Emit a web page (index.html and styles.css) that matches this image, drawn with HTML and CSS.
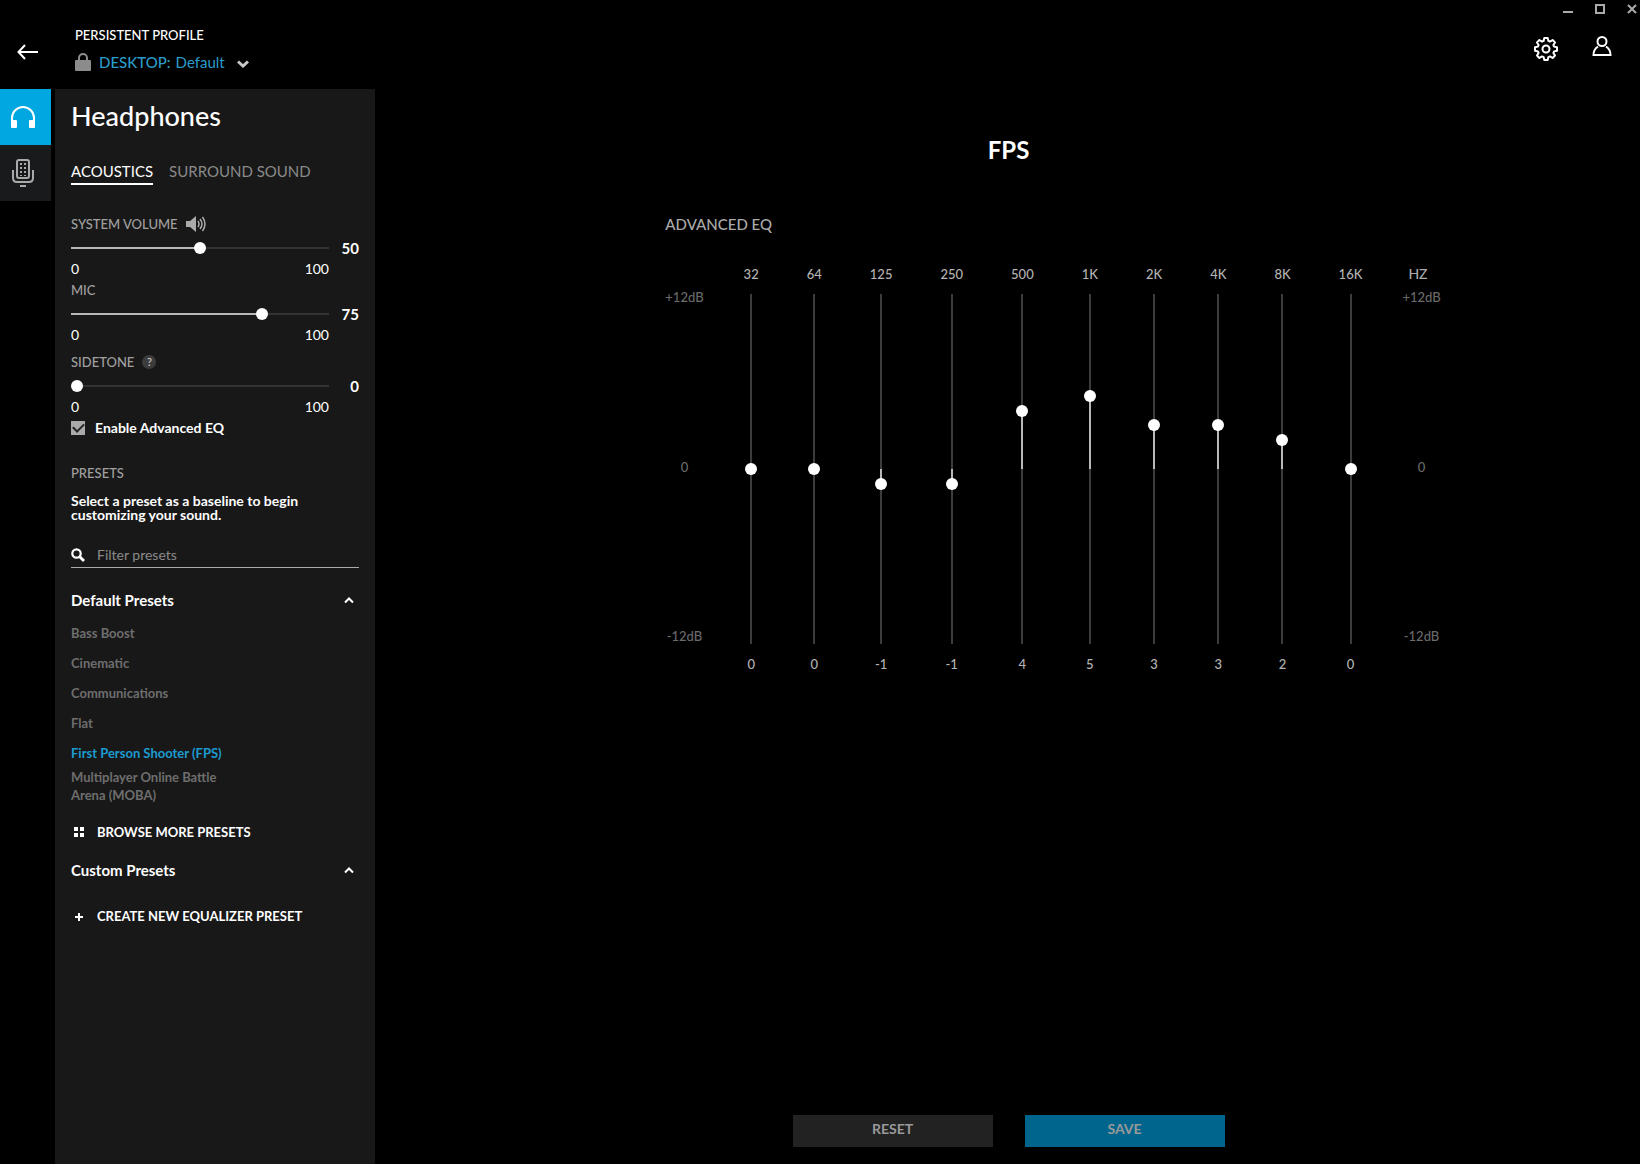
FILE: index.html
```html
<!DOCTYPE html>
<html lang="en">
<head>
<meta charset="utf-8">
<meta name="viewport" content="width=device-width, initial-scale=1">
<title>Headphones - Equalizer</title>
<link rel="stylesheet" href="styles.css">
</head>
<body>
<div class="app">
  <header class="topbar">
    <button class="icon-btn back" type="button" aria-label="Back">
      <svg width="22" height="16" viewBox="0 0 22 16" fill="none" stroke="#fff" stroke-width="2"><path d="M21 8H1.500M8 1L1.500 8L8 15"/></svg>
    </button>
    <div class="profile">
      <div class="profile-title">PERSISTENT PROFILE</div>
      <div class="profile-row">
        <svg width="16" height="18" viewBox="0 0 16 18"><path d="M4 8V5a4 4 0 0 1 8 0v3" fill="none" stroke="#8c8c8c" stroke-width="2"/><rect y="7" width="16" height="11" rx="1" fill="#8c8c8c"/></svg>
        <label class="profile-label" for="profile">DESKTOP:</label>
        <select class="profile-select" id="profile"><option>Default</option></select>
        <svg class="profile-caret" width="12" height="8" viewBox="0 0 12 8" fill="none" stroke="#c8c8c8" stroke-width="3"><path d="M1 1.500L6 6L11 1.500"/></svg>
      </div>
    </div>
    <div class="top-right">
      <div class="window-controls">
        <button class="icon-btn" type="button" aria-label="Minimize"><svg width="10" height="10" viewBox="0 0 10 10"><path d="M0 8H10" stroke="#aaa" stroke-width="2"/></svg></button>
        <button class="icon-btn" type="button" aria-label="Maximize"><svg width="10" height="10" viewBox="0 0 10 10"><rect x="1" y="1" width="8" height="8" fill="none" stroke="#aaa" stroke-width="2"/></svg></button>
        <button class="icon-btn" type="button" aria-label="Close"><svg width="10" height="10" viewBox="0 0 10 10"><path d="M1 1L9 9M9 1L1 9" stroke="#aaa" stroke-width="2"/></svg></button>
      </div>
      <div class="account">
        <button class="icon-btn" type="button" aria-label="Settings">
          <svg width="26" height="26" viewBox="0 0 26 26" fill="none" stroke="#fff" stroke-width="2" stroke-linejoin="round"><path d="M11.300 2h3.400l.7 2.900 1.600.7 2.600-1.600 2.400 2.400-1.600 2.600.7 1.600 2.900.7v3.400l-2.900.7-.7 1.600 1.600 2.600-2.400 2.400-2.600-1.600-1.600.7-.7 2.900h-3.400l-.7-2.900-1.600-.7-2.600 1.600-2.400-2.400 1.600-2.600-.7-1.600-2.900-.7v-3.400l2.900-.7.7-1.600-1.600-2.600 2.400-2.400 2.600 1.600 1.600-.7z"/><circle cx="13" cy="13" r="3.500"/></svg>
        </button>
        <button class="icon-btn user" type="button" aria-label="Account">
          <svg width="20" height="20" viewBox="0 0 20 20" fill="none" stroke="#fff" stroke-width="2"><circle cx="10" cy="5.500" r="4.500"/><path d="M6 10.500C3 12.500 1.500 15 1.500 19H18.500C18.500 15 17 12.500 14 10.500"/></svg>
        </button>
      </div>
    </div>
  </header>

  <nav class="rail" aria-label="Device sections">
    <button class="rail-btn active" type="button" aria-label="Headphones">
      <svg width="26" height="24" viewBox="0 0 26 24"><path d="M2 18V13a11 11 0 0 1 22 0v5" fill="none" stroke="#fff" stroke-width="2"/><rect x="1" y="15" width="6" height="8" rx="1" fill="#fff"/><rect x="19" y="15" width="6" height="8" rx="1" fill="#fff"/></svg>
    </button>
    <button class="rail-btn" type="button" aria-label="Microphone">
      <svg width="24" height="30" viewBox="0 0 24 30" fill="none" stroke="#aaa" stroke-width="2"><rect x="6" y="2" width="12" height="18" rx="2"/><path d="M2 12v8q0 4 4 4h12q4 0 4-4v-8M9 28h6"/><path d="M10 5v13M14 5v13" stroke-dasharray="2 2"/></svg>
    </button>
  </nav>

  <aside class="panel">
    <h1 class="panel-title">Headphones</h1>
    <div class="tabs" role="tablist">
      <button class="tab active" type="button" role="tab" aria-selected="true">ACOUSTICS</button>
      <button class="tab" type="button" role="tab" aria-selected="false">SURROUND SOUND</button>
    </div>

    <section class="level">
      <label class="caption" for="volume">SYSTEM VOLUME
        <svg width="21" height="18" viewBox="0 0 21 18"><path d="M0 6h4l6-5v16l-6-5H0z" fill="#aaa"/><path d="M12 6q2 3 0 6M14 4q4 5 0 10M16.500 2q5 7 0 14" fill="none" stroke="#aaa" stroke-width="1.500"/></svg>
      </label>
      <div class="level-row"><input class="h-range" id="volume" type="range" min="0" max="100" value="50" style="--pos:50%"><output class="level-value" for="volume">50</output></div>
      <div class="level-scale"><span>0</span><span>100</span></div>
    </section>
    <section class="level">
      <label class="caption" for="mic">MIC</label>
      <div class="level-row"><input class="h-range" id="mic" type="range" min="0" max="100" value="75" style="--pos:75%"><output class="level-value" for="mic">75</output></div>
      <div class="level-scale"><span>0</span><span>100</span></div>
    </section>
    <section class="level sidetone">
      <div class="caption"><label for="sidetone">SIDETONE</label><button class="help" type="button" aria-label="About sidetone">?</button></div>
      <div class="level-row"><input class="h-range" id="sidetone" type="range" min="0" max="100" value="0" style="--pos:0%"><output class="level-value" for="sidetone">0</output></div>
      <div class="level-scale"><span>0</span><span>100</span></div>
    </section>

    <label class="check"><input class="check-box" type="checkbox" checked>Enable Advanced EQ</label>

    <h2 class="caption presets-caption">PRESETS</h2>
    <p class="hint">Select a preset as a baseline to begin customizing your sound.</p>
    <div class="search">
      <svg width="14" height="14" viewBox="0 0 14 14" fill="none" stroke="#fff"><circle cx="5.500" cy="5.500" r="4.200" stroke-width="2.200"/><path d="M8.500 8.500L13 13" stroke-width="2.800"/></svg>
      <input class="search-input" type="text" placeholder="Filter presets" aria-label="Filter presets">
    </div>

    <button class="group-head" type="button" aria-expanded="true">Default Presets
      <svg width="10" height="8" viewBox="0 0 10 8" fill="none" stroke="#fff" stroke-width="2"><path d="M1 6.500L5 2.500L9 6.500"/></svg>
    </button>
    <ul class="presets">
      <li><button class="preset" type="button">Bass Boost</button></li>
      <li><button class="preset" type="button">Cinematic</button></li>
      <li><button class="preset" type="button">Communications</button></li>
      <li><button class="preset" type="button">Flat</button></li>
      <li><button class="preset selected" type="button">First Person Shooter (FPS)</button></li>
      <li><button class="preset wrapped" type="button">Multiplayer Online Battle Arena (MOBA)</button></li>
    </ul>
    <button class="action" type="button">
      <svg width="16" height="12" viewBox="0 0 16 12" fill="#fff"><path d="M3 1h4v4H3zM9 1h4v4H9zM3 7h4v4H3zM9 7h4v4H9z"/></svg>BROWSE MORE PRESETS
    </button>
    <button class="group-head custom" type="button" aria-expanded="true">Custom Presets
      <svg width="10" height="8" viewBox="0 0 10 8" fill="none" stroke="#fff" stroke-width="2"><path d="M1 6.500L5 2.500L9 6.500"/></svg>
    </button>
    <button class="action create" type="button">
      <svg width="16" height="12" viewBox="0 0 16 12" stroke="#fff" stroke-width="2"><path d="M4 7h8M8 3v8"/></svg>CREATE NEW EQUALIZER PRESET
    </button>
  </aside>

  <main class="main">
    <h2 class="preset-name">FPS</h2>
    <section class="eq">
      <h3 class="eq-title">ADVANCED EQ</h3>
      <div class="eq-grid">
        <div class="scale"><span class="unit"></span><div class="scale-marks"><span>+12dB</span><span>0</span><span>-12dB</span></div></div>
        <div class="bands">
          <div class="band"><label for="b32">32</label><input class="v-range" id="b32" type="range" min="-12" max="12" value="0" style="--gain:0"><output for="b32">0</output></div>
          <div class="band"><label for="b64">64</label><input class="v-range" id="b64" type="range" min="-12" max="12" value="0" style="--gain:0"><output for="b64">0</output></div>
          <div class="band"><label for="b125">125</label><input class="v-range" id="b125" type="range" min="-12" max="12" value="-1" style="--gain:-1"><output for="b125">-1</output></div>
          <div class="band"><label for="b250">250</label><input class="v-range" id="b250" type="range" min="-12" max="12" value="-1" style="--gain:-1"><output for="b250">-1</output></div>
          <div class="band"><label for="b500">500</label><input class="v-range" id="b500" type="range" min="-12" max="12" value="4" style="--gain:4"><output for="b500">4</output></div>
          <div class="band"><label for="b1k">1K</label><input class="v-range" id="b1k" type="range" min="-12" max="12" value="5" style="--gain:5"><output for="b1k">5</output></div>
          <div class="band"><label for="b2k">2K</label><input class="v-range" id="b2k" type="range" min="-12" max="12" value="3" style="--gain:3"><output for="b2k">3</output></div>
          <div class="band"><label for="b4k">4K</label><input class="v-range" id="b4k" type="range" min="-12" max="12" value="3" style="--gain:3"><output for="b4k">3</output></div>
          <div class="band"><label for="b8k">8K</label><input class="v-range" id="b8k" type="range" min="-12" max="12" value="2" style="--gain:2"><output for="b8k">2</output></div>
          <div class="band"><label for="b16k">16K</label><input class="v-range" id="b16k" type="range" min="-12" max="12" value="0" style="--gain:0"><output for="b16k">0</output></div>
        </div>
        <div class="scale"><span class="unit">HZ</span><div class="scale-marks"><span>+12dB</span><span>0</span><span>-12dB</span></div></div>
      </div>
    </section>
    <div class="buttons">
      <button class="btn" type="button">RESET</button>
      <button class="btn primary" type="button">SAVE</button>
    </div>
  </main>
</div>
</body>
</html>
```
FILE: styles.css
```css
* { box-sizing: border-box; }

body {
  margin: 0;
  background: #000;
  color: #fff;
  font: 14px/16px Lato, "Open Sans", sans-serif;
}

h1, h2, h3, p, ul { margin: 0; padding: 0; }
ul { list-style: none; }

button, input, select {
  margin: 0;
  padding: 0;
  border: 0;
  background: none;
  color: inherit;
  font: inherit;
}

svg { display: block; flex: none; }

.app {
  display: grid;
  grid-template: 89px 1fr / 55px 320px 1fr;
  min-height: 100vh;
}

/* Top bar */
.topbar {
  grid-column: 1 / -1;
  display: flex;
  align-items: flex-start;
}
.icon-btn { display: flex; }
.back { padding: 44px 16px 0 17px; }
.profile { padding: 27px 0 0 20px; }
.profile-title { font-size: 13px; font-weight: 500; }
.profile-row {
  display: flex;
  align-items: center;
  height: 18px;
  margin-top: 10px;
  color: #2b9cc9;
  font-size: 15px;
}
.profile-label { margin-left: 8px; font-weight: 500; }
.profile-select {
  appearance: none;
  field-sizing: content;
  margin-left: 5px;
}
.profile-select option { color: #000; }
.profile-caret { margin: 4px 0 0 12px; }

.top-right { margin-left: auto; }
.window-controls {
  display: flex;
  justify-content: flex-end;
  gap: 22px;
  padding: 4px 3px 0 0;
}
.account {
  display: flex;
  gap: 33px;
  padding: 22px 28px 0 0;
}

/* Side rail */
.rail { display: flex; flex-direction: column; }
.rail-btn {
  display: flex;
  align-items: center;
  justify-content: center;
  width: 51px;
  height: 56px;
  padding-right: 5px;
  background: #181a1c;
}
.rail-btn.active { background: #00a7e0; }

/* Settings panel */
.panel { padding: 11px 16px 24px; background: #181818; }
.panel-title { font: 500 27px/32px Lato, sans-serif; }

.tabs { display: flex; gap: 16px; margin-top: 29px; }
.tab {
  padding-bottom: 2px;
  border-bottom: 2px solid transparent;
  color: #8a8a8a;
  font-size: 15px;
  line-height: 20px;
}
.tab.active { color: #fff; border-color: #fff; }

.caption {
  display: flex;
  align-items: center;
  gap: 8px;
  height: 16px;
  color: #a0a0a0;
  font-size: 13px;
  font-weight: 500;
}
.level { margin-top: 5px; }
.tabs + .level { margin-top: 31px; }
.level.sidetone { margin-top: 11px; }
.level-row { display: flex; justify-content: space-between; margin-top: 8px; }
.level-value { font-size: 15px; font-weight: 700; }
.level-scale {
  display: flex;
  justify-content: space-between;
  margin: 5px 30px 0 0;
}
.help {
  width: 14px;
  height: 14px;
  border-radius: 50%;
  background: #3c3c3c;
  color: #ccc;
  font-size: 11px;
  line-height: 14px;
}

.h-range, .v-range { appearance: none; }
.h-range { width: 258px; height: 16px; }
.h-range::-webkit-slider-runnable-track {
  height: 12px;
  background: linear-gradient(to right, #b8b8b8 var(--pos), #333 var(--pos)) center / 100% 2px no-repeat;
}
.h-range::-webkit-slider-thumb, .v-range::-webkit-slider-thumb {
  appearance: none;
  width: 12px;
  height: 12px;
  border-radius: 50%;
  background: #fff;
}

.check {
  display: flex;
  align-items: center;
  gap: 10px;
  margin-top: 5px;
  font-size: 14px;
  font-weight: 700;
}
.check-box {
  appearance: none;
  display: grid;
  place-items: center;
  width: 14px;
  height: 14px;
  background: #aaa;
}
.check-box:checked::before {
  content: "";
  width: 9px;
  height: 5px;
  margin-bottom: 3px;
  border: solid #222;
  border-width: 0 0 2px 2px;
  rotate: -45deg;
}

.presets-caption { margin-top: 29px; }
.hint {
  max-width: 264px;
  margin-top: 13px;
  font-size: 14px;
  font-weight: 700;
  line-height: 14px;
}
.search {
  display: flex;
  align-items: center;
  gap: 12px;
  height: 25px;
  margin-top: 21px;
  border-bottom: 1px solid #aaa;
}
.search-input { flex: 1; min-width: 0; outline: 0; }
.search-input::placeholder { color: #8a8a8a; }

.group-head {
  display: flex;
  align-items: center;
  justify-content: space-between;
  width: 100%;
  margin-top: 22px;
  padding-right: 5px;
  font-size: 15px;
  font-weight: 700;
  line-height: 20px;
}
.group-head.custom { margin-top: 18px; }
.presets { margin-top: 8px; }
.preset {
  display: block;
  color: #6e6e6e;
  font-size: 13px;
  font-weight: 700;
  line-height: 30px;
  text-align: left;
}
.preset.selected { color: #1d9bd1; }
.preset.wrapped { max-width: 176px; line-height: 18px; }
.action {
  display: flex;
  align-items: center;
  gap: 10px;
  margin-top: 18px;
  font-size: 13px;
  font-weight: 700;
  line-height: 20px;
}
.action.create { margin-top: 26px; }

/* Equalizer */
.main {
  display: flex;
  flex-direction: column;
  align-items: center;
  padding: 45px 0 17px 2px;
}
.preset-name { font-size: 24px; line-height: 32px; }
.eq { margin-top: 50px; padding-left: 89px; }
.eq-title { color: #aaa; font-size: 15px; font-weight: 500; }
.eq-grid {
  display: flex;
  gap: 40px;
  margin-top: 34px;
  font-size: 13px;
  font-weight: 500;
}
.bands { display: flex; gap: 48px; }
.band {
  display: flex;
  flex-direction: column;
  align-items: center;
  gap: 6px;
  color: #b4b4b4;
}
.v-range {
  writing-mode: vertical-lr;
  direction: rtl;
  width: 12px;
  height: 362px;
}
.v-range::-webkit-slider-runnable-track {
  --level: calc(50% + var(--gain) * 100% / 24);
  --low: min(50%, var(--level));
  --high: max(50%, var(--level));
  width: 12px;
  background: linear-gradient(to top, #3c3c3c var(--low), #b8b8b8 var(--low) var(--high), #3c3c3c var(--high)) center / 2px 350px no-repeat;
}
.scale { display: flex; flex-direction: column; gap: 7px; }
.unit { height: 16px; padding-left: 6px; color: #aaa; font-size: 14px; }
.scale-marks {
  display: flex;
  flex-direction: column;
  align-items: center;
  justify-content: space-between;
  height: 355px;
  color: #6a6a6a;
}

.buttons { display: flex; gap: 32px; margin-top: auto; }
.btn {
  width: 200px;
  height: 32px;
  padding-bottom: 4px;
  background: #222;
  color: #999;
  font-weight: 700;
}
.btn.primary { background: #00658c; }
```
